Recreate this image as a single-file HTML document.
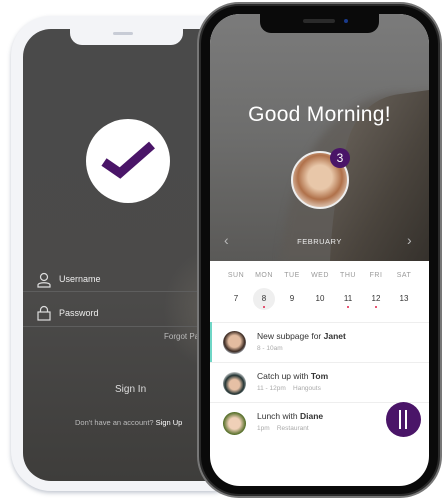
<!DOCTYPE html>
<html><head><style>
*{margin:0;padding:0;box-sizing:border-box}
body{width:445px;height:501px;background:#fff;position:relative;overflow:hidden;font-family:"Liberation Sans",sans-serif}
.abs{position:absolute}
.row{position:absolute;left:0;width:219px}
.row span{position:absolute;width:28px;margin-left:-14px;text-align:center}
</style></head><body>
<!-- left phone -->
<div class="abs" style="left:11px;top:16px;width:240px;height:475px;border-radius:40px;background:#f3f4f7;box-shadow:0 2px 4px rgba(120,130,150,.45)"></div>
<div class="abs" style="left:23px;top:29px;width:230px;height:452px;border-radius:28px 0 0 28px;background:linear-gradient(180deg,#4a4a4a 0%,#4b4a49 60%,#3e3d3b 100%);overflow:hidden">
  <div class="abs" style="left:140px;top:220px;width:60px;height:120px;background:radial-gradient(ellipse at 80% 50%,#5e5b56,transparent 70%)"></div>
</div>
<div class="abs" style="left:70px;top:28px;width:113px;height:17px;background:#f3f4f7;border-radius:0 0 12px 12px"></div>
<div class="abs" style="left:113px;top:32px;width:20px;height:3px;background:#c8ccd6;border-radius:2px"></div>
<div class="abs" style="left:86px;top:119px;width:84px;height:84px;border-radius:50%;background:#fff"></div>
<svg class="abs" style="left:100px;top:140px" width="60" height="50" viewBox="0 0 60 50"><path d="M4 22 L20 33 L52 5" stroke="#4a1568" stroke-width="9" fill="none" stroke-linejoin="miter"/></svg>
<svg class="abs" style="left:36px;top:272px" width="16" height="16" viewBox="0 0 16 16" fill="none" stroke="#ddd" stroke-width="1.2"><circle cx="8" cy="5" r="3.5"/><path d="M2 15 v-2 c0-3 12-3 12 0 v2 z"/></svg>
<div class="abs" style="left:59px;top:274px;font-size:9px;color:#eee">Username</div>
<div class="abs" style="left:23px;top:291px;width:180px;height:1px;background:#5e5e5e"></div>
<svg class="abs" style="left:36px;top:305px" width="16" height="16" viewBox="0 0 16 16" fill="none" stroke="#ddd" stroke-width="1.2"><rect x="2" y="7" width="12" height="8"/><path d="M4.5 7 V5 a3.5 3.5 0 0 1 7 0 V7"/></svg>
<div class="abs" style="left:59px;top:308px;font-size:9px;color:#eee">Password</div>
<div class="abs" style="left:23px;top:326px;width:180px;height:1px;background:#5e5e5e"></div>
<div class="abs" style="left:164px;top:332px;font-size:8px;color:#bbb;white-space:nowrap">Forgot Pa</div>
<div class="abs" style="left:115px;top:384px;font-size:10px;color:#ddd">Sign In</div>
<div class="abs" style="left:75px;top:418px;font-size:7.5px;color:#bbb;white-space:nowrap">Don't have an account? <span style="color:#fff">Sign Up</span></div>
<!-- right phone -->
<div class="abs" style="left:197px;top:2px;width:245px;height:496px;border-radius:42px;background:#2a2a2a;border:2px solid #777"></div>
<div class="abs" style="left:201px;top:6px;width:237px;height:488px;border-radius:38px;background:#0a0a0a"></div>
<div class="abs" style="left:210px;top:14px;width:219px;height:472px;border-radius:30px;background:#fff;overflow:hidden">
  <div class="abs" style="left:0;top:0;width:219px;height:247px;background:linear-gradient(180deg,#7b7b7b 0%,#6d6d6c 50%,#5a5957 100%)"></div>
  <svg class="abs" style="left:0;top:0" width="219" height="247" viewBox="0 0 219 247">
    <defs>
      <linearGradient id="rk" x1="0" y1="0" x2="1" y2="1"><stop offset="0" stop-color="#6f6860"/><stop offset="0.6" stop-color="#4a443d"/><stop offset="1" stop-color="#35312c"/></linearGradient>
      <filter id="bl"><feGaussianBlur stdDeviation="4"/></filter>
    </defs>
    <path d="M70 247 C75 200 85 160 100 140 C110 120 130 100 150 90 C165 82 185 78 200 80 L219 78 L219 247 Z" fill="#5f5a54" filter="url(#bl)" opacity=".7"/>
    <path d="M120 247 C122 200 130 150 140 120 C150 95 170 82 190 80 L219 76 L219 247 Z" fill="url(#rk)"/>
  </svg>
  <div class="abs" style="left:0;top:89px;width:219px;text-align:center;font-size:21px;color:#fff;letter-spacing:.3px">Good Morning!</div>
  <div class="abs" style="left:81px;top:137px;width:58px;height:58px;border-radius:50%;background:radial-gradient(circle at 50% 45%,#e8c7a9 0 30%,#b0714a 55%,#e9d7c8 80%);border:2px solid #eee"></div>
  <div class="abs" style="left:120px;top:134px;width:20px;height:20px;border-radius:50%;background:#4a1568;color:#fff;font-size:12px;text-align:center;line-height:20px">3</div>
  <div class="abs" style="left:14px;top:218px;color:#bbb;font-size:14px">‹</div>
  <div class="abs" style="left:197px;top:218px;color:#bbb;font-size:14px">›</div>
  <div class="abs" style="left:0;top:223px;width:219px;text-align:center;font-size:7.5px;color:#eee;letter-spacing:.5px">FEBRUARY</div>
  <div class="row" style="top:258px;font-size:7px;color:#999;letter-spacing:.5px"><span style="left:26px">SUN</span><span style="left:54px">MON</span><span style="left:82px">TUE</span><span style="left:110px">WED</span><span style="left:138px">THU</span><span style="left:166px">FRI</span><span style="left:194px">SAT</span></div>
  <div class="abs" style="left:43px;top:274px;width:22px;height:22px;border-radius:50%;background:#efefef"></div>
  <div class="row" style="top:280px;font-size:8px;color:#333"><span style="left:26px">7</span><span style="left:54px">8</span><span style="left:82px">9</span><span style="left:110px">10</span><span style="left:138px">11</span><span style="left:166px">12</span><span style="left:194px">13</span></div>
  <div class="abs" style="left:53px;top:292px;width:2px;height:2px;background:#e2234a;border-radius:50%"></div>
  <div class="abs" style="left:137px;top:292px;width:2px;height:2px;background:#e2234a;border-radius:50%"></div>
  <div class="abs" style="left:165px;top:292px;width:2px;height:2px;background:#e2234a;border-radius:50%"></div>
  <div class="abs" style="left:0;top:308px;width:219px;height:1px;background:#eee"></div>
  <div class="abs" style="left:0;top:308px;width:2px;height:40px;background:#6fd6c6"></div>
  <div class="abs" style="left:13px;top:317px;width:23px;height:23px;border-radius:50%;background:radial-gradient(circle at 50% 45%,#e3bca0 0 35%,#3b2a22 60%,#cfe0ef 80%)"></div>
  <div class="abs" style="left:47px;top:317px;font-size:8.5px;color:#333">New subpage for <b style="font-weight:600">Janet</b></div>
  <div class="abs" style="left:47px;top:331px;font-size:6.5px;color:#aaa">8 - 10am</div>
  <div class="abs" style="left:0;top:348px;width:219px;height:1px;background:#eee"></div>
  <div class="abs" style="left:13px;top:358px;width:23px;height:23px;border-radius:50%;background:radial-gradient(circle at 50% 55%,#e6c0a5 0 30%,#233 55%,#fff 80%)"></div>
  <div class="abs" style="left:47px;top:357px;font-size:8.5px;color:#333">Catch up with <b style="font-weight:600">Tom</b></div>
  <div class="abs" style="left:47px;top:371px;font-size:6.5px;color:#aaa">11 - 12pm &nbsp;&nbsp; Hangouts</div>
  <div class="abs" style="left:0;top:388px;width:219px;height:1px;background:#eee"></div>
  <div class="abs" style="left:13px;top:398px;width:23px;height:23px;border-radius:50%;background:radial-gradient(circle at 50% 50%,#f0d0b8 0 35%,#4d6a22 70%)"></div>
  <div class="abs" style="left:47px;top:397px;font-size:8.5px;color:#333">Lunch with <b style="font-weight:600">Diane</b></div>
  <div class="abs" style="left:47px;top:411px;font-size:6.5px;color:#aaa">1pm &nbsp;&nbsp; Restaurant</div>
  <div class="abs" style="left:176px;top:388px;width:35px;height:35px;border-radius:50%;background:#4a1568"></div>
  <div class="abs" style="left:189px;top:396px;width:2px;height:19px;background:#fff"></div>
  <div class="abs" style="left:195px;top:396px;width:2px;height:19px;background:#fff"></div>
</div>
<div class="abs" style="left:260px;top:13px;width:119px;height:20px;background:#0a0a0a;border-radius:0 0 11px 11px"></div>
<div class="abs" style="left:303px;top:19px;width:32px;height:4px;background:#2a2a2a;border-radius:2px"></div>
<div class="abs" style="left:344px;top:19px;width:4px;height:4px;background:#1a3a8a;border-radius:50%"></div>
</body></html>
